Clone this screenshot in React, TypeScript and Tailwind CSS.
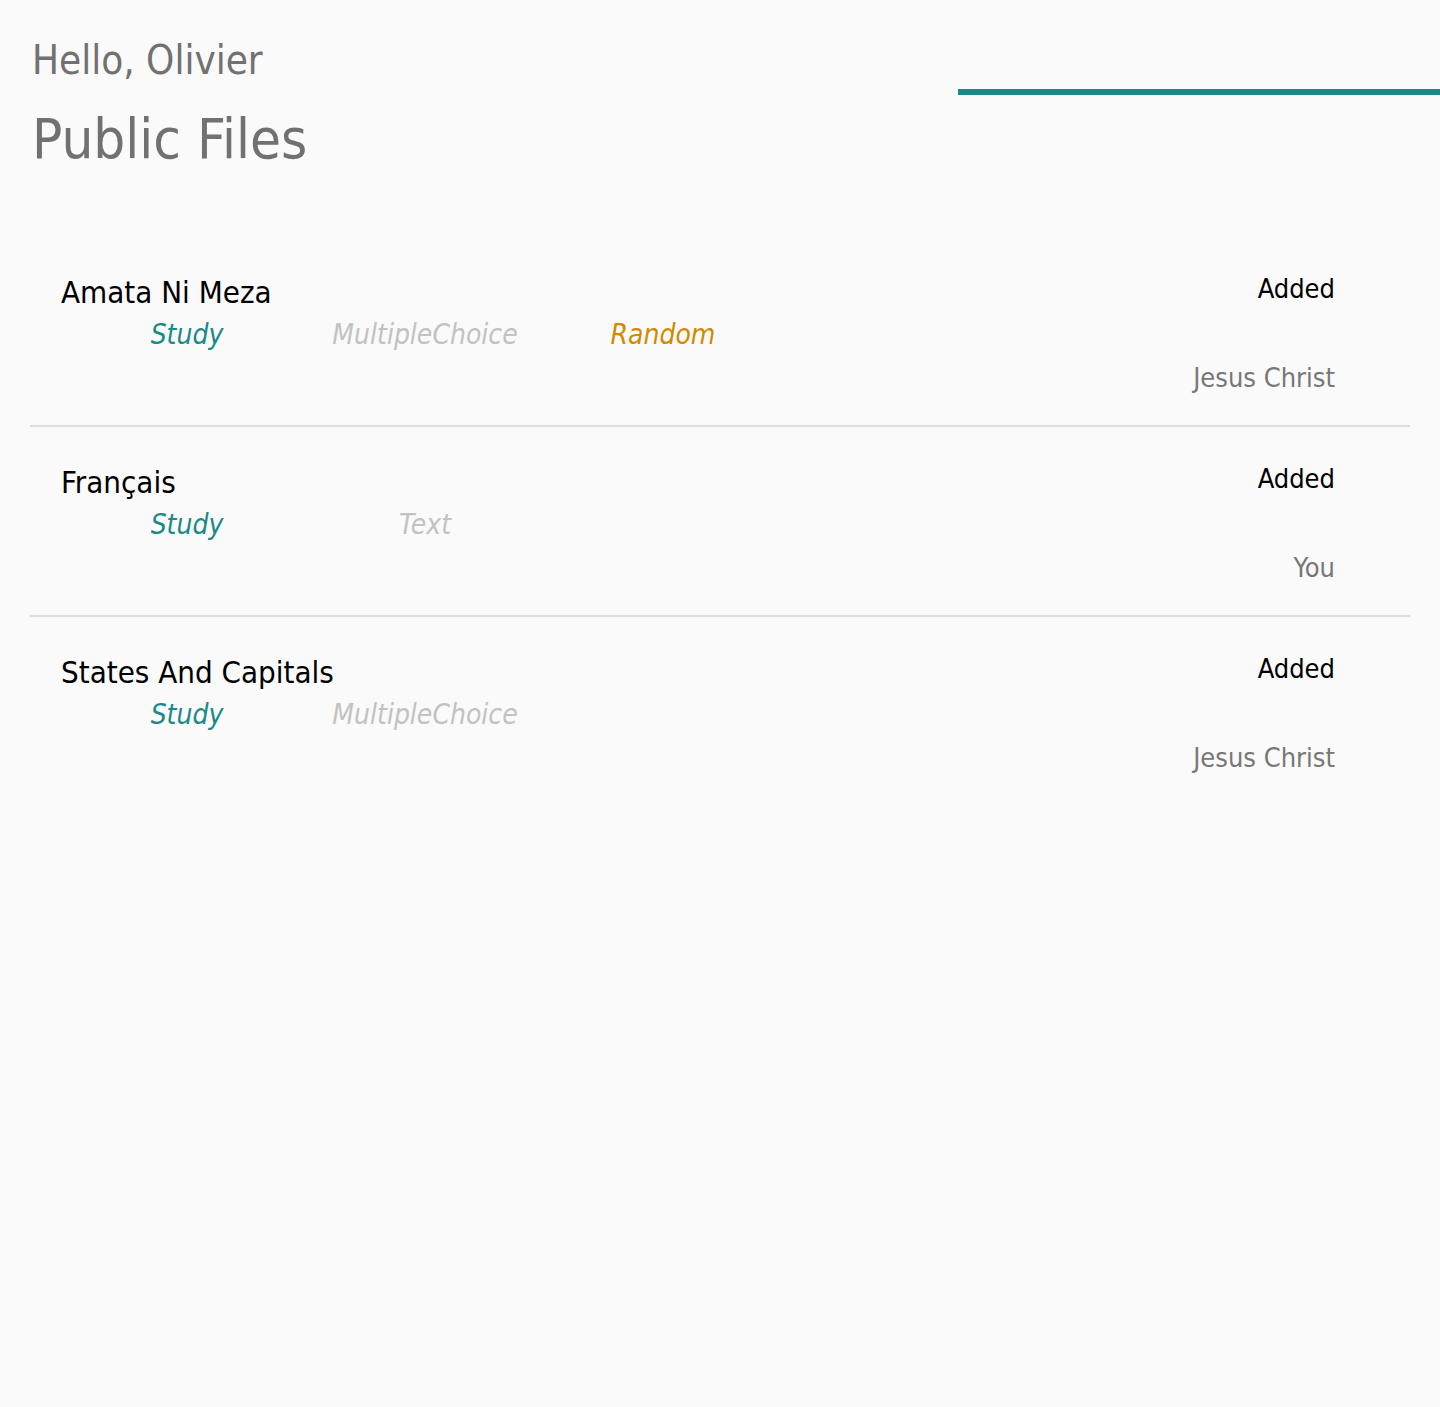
import React from 'react';

type FileRow = {
  title: string;
  tags: { label: string; color: string }[];
  owner: string;
};

const files: FileRow[] = [
  {
    title: 'Amata Ni Meza',
    tags: [
      { label: 'Study', color: 'text-[#1a8a87]' },
      { label: 'MultipleChoice', color: 'text-[#c2c2c2]' },
      { label: 'Random', color: 'text-[#d08a00]' },
    ],
    owner: 'Jesus Christ',
  },
  {
    title: 'Français',
    tags: [
      { label: 'Study', color: 'text-[#1a8a87]' },
      { label: 'Text', color: 'text-[#c2c2c2]' },
    ],
    owner: 'You',
  },
  {
    title: 'States And Capitals',
    tags: [
      { label: 'Study', color: 'text-[#1a8a87]' },
      { label: 'MultipleChoice', color: 'text-[#c2c2c2]' },
    ],
    owner: 'Jesus Christ',
  },
];

const App: React.FC = () => {
  return (
    <div className="min-h-[1407px] bg-[#fafafa] font-['DejaVu_Sans_Condensed',sans-serif]">
      <header className="flex justify-between">
        <div className="pl-[32px] pt-[32px]">
          <h2 className="text-[40px] leading-[56px] text-[#717171]">Hello, Olivier</h2>
          <h1 className="text-[56px] leading-[72px] text-[#717171] mt-[15px]">Public Files</h1>
        </div>
        <div className="mt-[89px] h-[6px] w-[482px] bg-[#1a8a87]" />
      </header>

      <ul className="mx-[30px] mt-[62px]">
        {files.map((f) => (
          <li
            key={f.title}
            className="flex justify-between border-b-2 last:border-b-0 border-[#dddddd] h-[190px] pl-[31px] pr-[75px] pt-[37px]"
          >
            <div>
              <div className="text-[31px] leading-[36px] text-black">{f.title}</div>
              <div className="flex pl-[7px] mt-[7px]">
                {f.tags.map((t) => (
                  <span key={t.label} className={`w-[238px] text-center italic text-[28px] leading-[36px] ${t.color}`}>
                    {t.label}
                  </span>
                ))}
              </div>
            </div>
            <div className="flex flex-col items-end">
              <div className="text-[27px] leading-[30px] text-black">Added</div>
              <div className="text-[27px] leading-[36px] text-[#777777] mt-[56px]">{f.owner}</div>
            </div>
          </li>
        ))}
      </ul>
    </div>
  );
};

export default App;
